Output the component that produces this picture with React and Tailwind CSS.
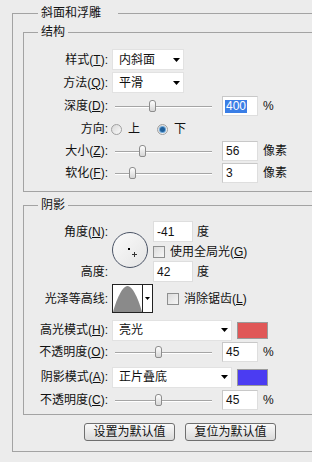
import React from 'react'

// 带下划线的助记字母
function Mn({ k }) {
  return (
    <>
      (<span className="underline">{k}</span>)
    </>
  )
}

function Label({ children }) {
  return <div className="w-[84px] shrink-0 text-right whitespace-nowrap">{children}</div>
}

function Arrow() {
  return (
    <svg width="7" height="4" viewBox="0 0 7 4" className="shrink-0">
      <path d="M0 0h7L3.5 4z" fill="#000" />
    </svg>
  )
}

function Dropdown({ value, width }) {
  return (
    <div
      className="h-[21px] bg-white border border-[#e2e2e2] flex items-center pl-[6px] pr-[3px] justify-between"
      style={{ width }}
    >
      <span>{value}</span>
      <Arrow />
    </div>
  )
}

function Slider({ pos }) {
  // pos: 滑块中心相对轨道起点的像素
  return (
    <div className="relative w-[104px] h-[14px] shrink-0">
      <div className="absolute left-[3px] right-[4px] top-[7px] h-px bg-[#a5a5a5]" />
      <div className="absolute left-[3px] right-[4px] top-[8px] h-px bg-white" />
      <div
        className="absolute top-[1px] w-[7px] h-[12px] rounded-t-[3px] rounded-b-[2px] border border-[#8d8d8d] bg-gradient-to-b from-white to-[#d6d6d6]"
        style={{ left: pos - 4 }}
      />
    </div>
  )
}

function NumInput({ value, selected }) {
  return (
    <div className="ml-[6px] w-[36px] h-[20px] bg-white border border-[#dedede] border-t-[#c8c8c8] border-l-[#c8c8c8] flex items-center pl-[2px]">
      {selected ? (
        <span className="bg-[#3a7ee6] text-white px-px leading-[13px]">{value}</span>
      ) : (
        <span className="pl-px">{value}</span>
      )}
    </div>
  )
}

function SliderRow({ label, pos, value, unit, selected, h = 'h-[22px]' }) {
  return (
    <div className={`flex items-center ${h}`}>
      <Label>{label}</Label>
      <div className="ml-[4px] flex items-center">
        <Slider pos={pos} />
        <NumInput value={value} selected={selected} />
        <span className="ml-[5px]">{unit}</span>
      </div>
    </div>
  )
}

function Checkbox({ children }) {
  return (
    <div className="flex items-center">
      <div className="w-[12px] h-[12px] border border-[#8e8f8f] bg-gradient-to-br from-[#dcdcdc] to-[#f6f6f6]" />
      <span className="ml-[5px] whitespace-nowrap">{children}</span>
    </div>
  )
}

function Radio({ checked, children }) {
  return (
    <div className="flex items-center">
      <div className="w-[11px] h-[11px] rounded-full border border-[#a0a0a0] bg-gradient-to-br from-[#d8d8d8] to-[#fafafa] flex items-center justify-center">
        {checked && <div className="w-[5px] h-[5px] rounded-full bg-[#1f5f9a] shadow-[0_0_0_1px_#6ea7d8]" />}
      </div>
      <span className="ml-[6px]">{children}</span>
    </div>
  )
}

function Swatch({ color }) {
  return <div className="ml-[5px] w-[31px] h-[17px] border border-[#9a9a9a]" style={{ background: color }} />
}

function Group({ title, className, children }) {
  return (
    <fieldset className={`border border-[#a3a3a3] w-[320px] ${className}`}>
      <legend className="ml-[14px] px-[3px] leading-[16px]">{title}</legend>
      {children}
    </fieldset>
  )
}

export default function App() {
  return (
    <div className="w-[312px] h-[462px] overflow-hidden bg-[#ececec] text-[12px] leading-none text-[#111] font-['Liberation_Sans','Noto_Sans_CJK_SC',sans-serif]">
      <fieldset className="mt-[5px] ml-[12px] w-[330px] border border-[#a3a3a3] pl-[10px] pt-[3px] pb-[10px]">
        <legend className="ml-[15px] pl-[3px] pr-[17px] leading-[16px]">斜面和浮雕</legend>

        {/* 结构 */}
        <Group title="结构" className="pt-[8px] pb-[7px]">
          <div className="flex items-center h-[23px]">
            <Label>样式<Mn k="T" />:</Label>
            <div className="ml-[4px]"><Dropdown value="内斜面" width={72} /></div>
          </div>
          <div className="flex items-center h-[23px]">
            <Label>方法<Mn k="Q" />:</Label>
            <div className="ml-[4px]"><Dropdown value="平滑" width={72} /></div>
          </div>
          <SliderRow label={<>深度<Mn k="D" />:</>} pos={41} value="400" unit="%" selected h="h-[24px]" />
          <div className="flex items-center h-[22px]">
            <Label>方向:</Label>
            <div className="ml-[3px] flex items-center gap-[17px]">
              <Radio>上</Radio>
              <Radio checked>下</Radio>
            </div>
          </div>
          <SliderRow label={<>大小<Mn k="Z" />:</>} pos={31} value="56" unit="像素" />
          <SliderRow label={<>软化<Mn k="F" />:</>} pos={21} value="3" unit="像素" />
        </Group>

        {/* 阴影 */}
        <Group title="阴影" className="mt-[5px] pt-[7px] pb-[3px]">
          <div className="flex h-[63px]">
            <div className="w-[84px] shrink-0 flex flex-col justify-between py-px text-right">
              <div className="h-[21px] flex items-center justify-end">角度<Mn k="N" />:</div>
              <div className="h-[21px] flex items-center justify-end">高度:</div>
            </div>
            <div className="ml-[4px] mt-[12px] w-[36px] h-[36px] rounded-full border-[1.5px] border-[#4b5466] bg-gradient-to-br from-[#fbfbfb] to-[#e4e4e4] relative shrink-0">
              <div className="absolute left-[15px] top-[15px] w-[2px] h-[2px] bg-black" />
              <svg className="absolute left-[19px] top-[19px]" width="5" height="5" viewBox="0 0 5 5">
                <path d="M2.5 0v5M0 2.5h5" stroke="#333" strokeWidth="1" />
              </svg>
            </div>
            <div className="ml-[5px] flex flex-col pt-px">
              <div className="flex items-center h-[21px]">
                <div className="w-[40px] h-[21px] bg-white border border-[#dedede] flex items-center pl-[3px]">-41</div>
                <span className="ml-[4px]">度</span>
              </div>
              <div className="h-[19px] flex items-center">
                <Checkbox>使用全局光<Mn k="G" /></Checkbox>
              </div>
              <div className="flex items-center h-[21px]">
                <div className="w-[40px] h-[21px] bg-white border border-[#dedede] flex items-center pl-[3px]">42</div>
                <span className="ml-[4px]">度</span>
              </div>
            </div>
          </div>

          <div className="flex items-center h-[29px] mt-px">
            <Label>光泽等高线:</Label>
            <div className="ml-[4px] w-[41px] h-[29px] border border-[#222] bg-white flex">
              <svg width="29" height="27" viewBox="0 0 29 27" className="shrink-0">
                <path d="M0 27C3 16 9 1 14.5 1S26 16 29 27Z" fill="#8a8a8a" />
              </svg>
              <div className="w-px bg-[#222]" />
              <div className="flex-1 flex items-center justify-center">
                <svg width="5" height="3" viewBox="0 0 5 3"><path d="M0 0h5L2.5 3z" fill="#000" /></svg>
              </div>
            </div>
            <div className="ml-[14px]">
              <Checkbox>消除锯齿<Mn k="L" /></Checkbox>
            </div>
          </div>

          <div className="flex items-center h-[22px] mt-[6px]">
            <Label>高光模式<Mn k="H" />:</Label>
            <div className="ml-[4px] flex items-center">
              <Dropdown value="亮光" width={120} />
              <Swatch color="#e05757" />
            </div>
          </div>
          <SliderRow label={<>不透明度<Mn k="O" />:</>} pos={47} value="45" unit="%" />
          <div className="flex items-center h-[22px] mt-[3px]">
            <Label>阴影模式<Mn k="A" />:</Label>
            <div className="ml-[4px] flex items-center">
              <Dropdown value="正片叠底" width={120} />
              <Swatch color="#4b3cf2" />
            </div>
          </div>
          <div className="mt-px">
            <SliderRow label={<>不透明度<Mn k="C" />:</>} pos={47} value="45" unit="%" />
          </div>
        </Group>

        <div className="mt-[8px] pl-[61px] flex gap-[10px]">
          <button className="w-[91px] h-[18px] rounded-[3px] border border-[#6f6f6f] bg-gradient-to-b from-[#fafafa] to-[#dadada] leading-none">
            设置为默认值
          </button>
          <button className="w-[91px] h-[18px] rounded-[3px] border border-[#6f6f6f] bg-gradient-to-b from-[#fafafa] to-[#dadada] leading-none">
            复位为默认值
          </button>
        </div>
      </fieldset>
    </div>
  )
}
